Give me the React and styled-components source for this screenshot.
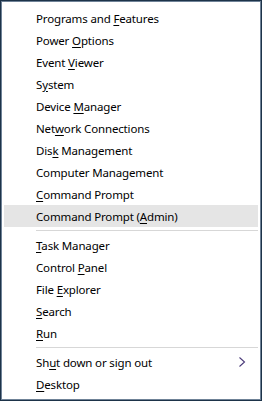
import React from 'react';
import styled, { createGlobalStyle } from 'styled-components';

const GlobalStyle = createGlobalStyle`
  html, body {
    margin: 0;
    padding: 0;
    background: #ffffff;
  }
`;

const groups = [
  [
    ['Programs and ', 'F', 'eatures'],
    ['Power ', 'O', 'ptions'],
    ['Event ', 'V', 'iewer'],
    ['S', 'y', 'stem'],
    ['Device ', 'M', 'anager'],
    ['Net', 'w', 'ork Connections'],
    ['Dis', 'k', ' Management'],
    ['Computer Mana', 'g', 'ement'],
    ['', 'C', 'ommand Prompt'],
    ['Command Prompt (', 'A', 'dmin)', true],
  ],
  [
    ['', 'T', 'ask Manager'],
    ['Control ', 'P', 'anel'],
    ['File ', 'E', 'xplorer'],
    ['', 'S', 'earch'],
    ['', 'R', 'un'],
  ],
  [
    ['Sh', 'u', 't down or sign out', false, true],
    ['', 'D', 'esktop'],
  ],
];

const App = () => {
  return (
    <>
      <GlobalStyle />
      <Menu>
        {groups.map((group, gi) => (
          <React.Fragment key={gi}>
            {gi > 0 && <Separator />}
            {group.map(([pre, key, post, active, sub]) => (
              <Item key={pre + key + post} $active={active}>
                <Label>
                  {pre}
                  <u>{key}</u>
                  {post}
                </Label>
                {sub && (
                  <Chevron width="8" height="12" viewBox="0 0 8 12">
                    <path d="M1.5 1.5 L6.5 6 L1.5 10.5" fill="none" stroke="#4a3a7a" strokeWidth="1.1" />
                  </Chevron>
                )}
              </Item>
            ))}
          </React.Fragment>
        ))}
      </Menu>
    </>
  );
};

const Menu = styled.div`
  box-sizing: border-box;
  width: 262px;
  height: 401px;
  background: #ffffff;
  border: 1px solid #1d3349;
  box-shadow: inset 0 0 0 1px #6f8297;
  padding: 6px 3px 4px 3px;
  display: flex;
  flex-direction: column;
  font-family: 'Noto Sans', 'Open Sans', sans-serif;
  font-size: 11.5px;
  letter-spacing: -0.15px;
  color: #000000;
`;

const Item = styled.div`
  height: 22px;
  display: flex;
  align-items: center;
  padding-left: 32px;
  padding-right: 12px;
  background: ${(p) => (p.$active ? '#e5e5e5' : 'transparent')};

  u {
    text-decoration-thickness: 1px;
    text-underline-offset: 2px;
  }
`;

const Label = styled.span`
  flex: 1;
  white-space: nowrap;
`;

const Chevron = styled.svg`
  display: block;
`;

const Separator = styled.div`
  height: 1px;
  background: #d7d7d7;
  margin: 3px 0 3px 32px;
`;

export default App;
